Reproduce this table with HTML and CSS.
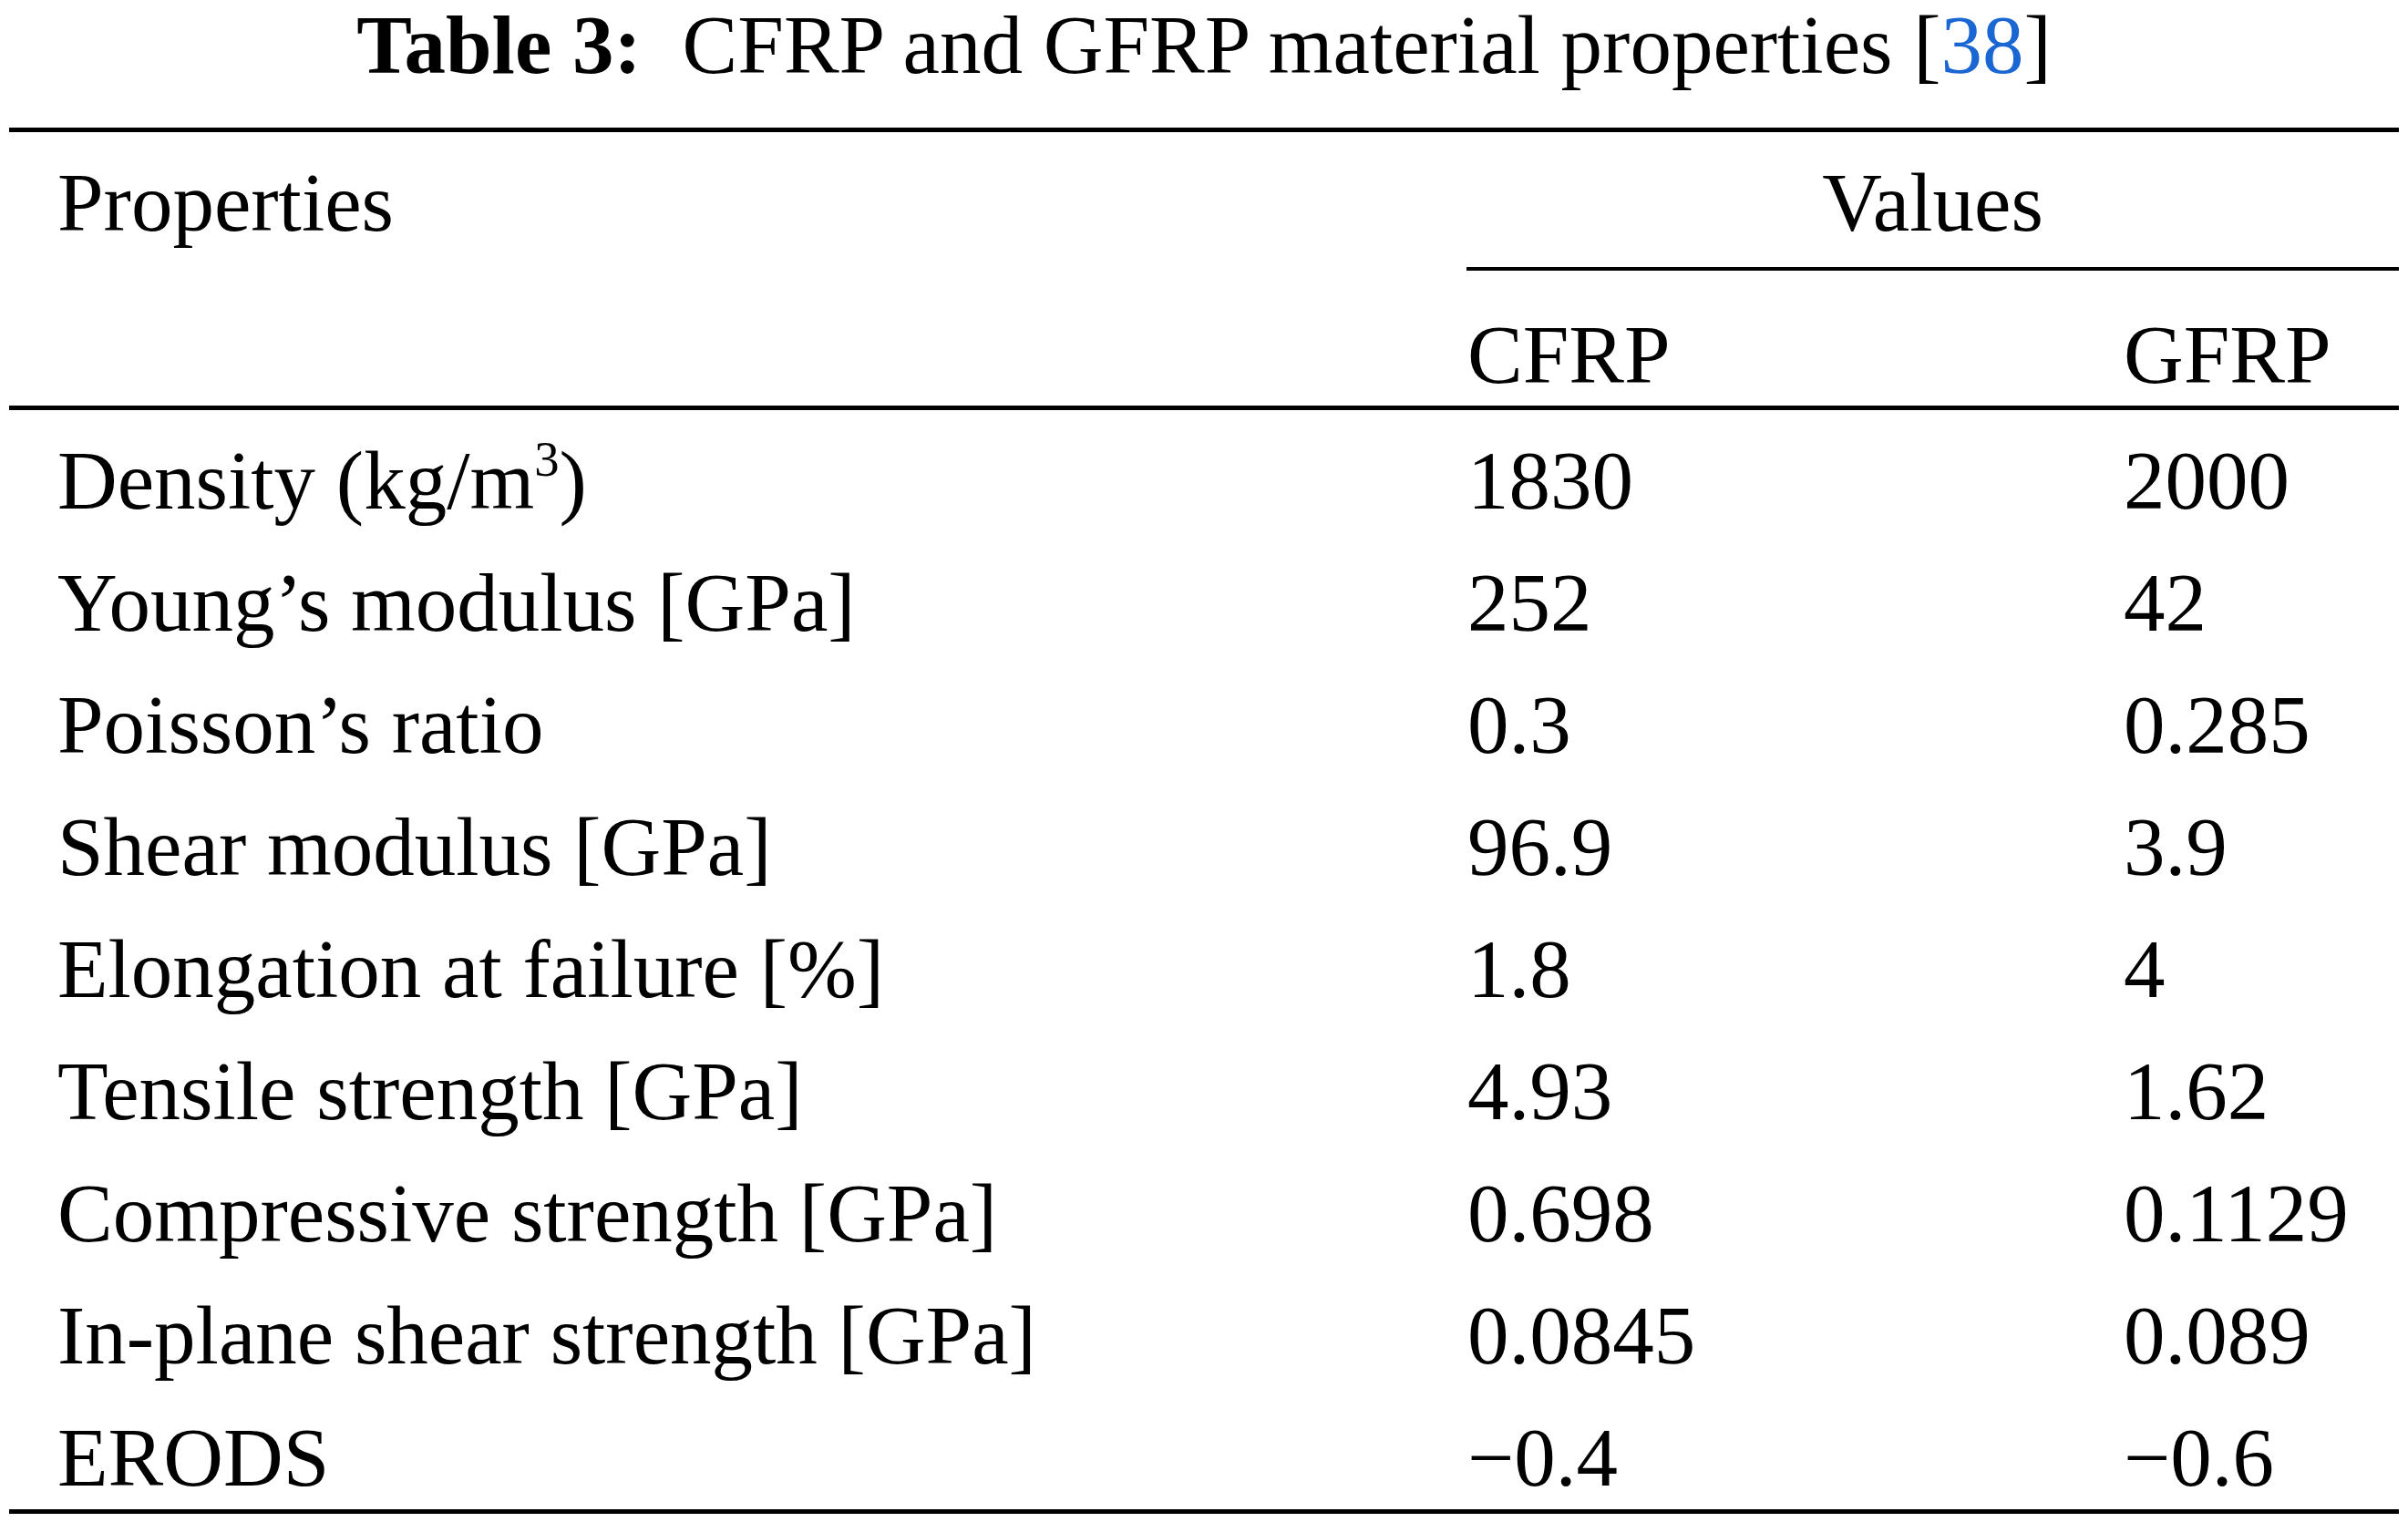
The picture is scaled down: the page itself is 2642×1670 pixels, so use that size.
FILE: index.html
```html
<!DOCTYPE html>
<html lang="en">
<head>
<meta charset="utf-8">
<title>Table 3: CFRP and GFRP material properties</title>
<link rel="stylesheet" href="styles.css">
</head>
<body>
<div class="page">
  <div class="caption"><span class="label">Table 3:</span> CFRP and GFRP material properties [<a class="ref" href="#ref38">38</a>]</div>
  <table class="props">
    <colgroup>
      <col class="c1">
      <col class="c2">
      <col class="c3">
    </colgroup>
    <thead>
      <tr>
        <th class="name h-prop" rowspan="2">Properties</th>
        <th class="h-values" colspan="2">Values</th>
      </tr>
      <tr>
        <th class="val h-sub">CFRP</th>
        <th class="val h-sub">GFRP</th>
      </tr>
    </thead>
    <tbody>
      <tr><td class="name">Density (kg/m<sup>3</sup>)</td><td class="val">1830</td><td class="val">2000</td></tr>
      <tr><td class="name">Young’s modulus [GPa]</td><td class="val">252</td><td class="val">42</td></tr>
      <tr><td class="name">Poisson’s ratio</td><td class="val">0.3</td><td class="val">0.285</td></tr>
      <tr><td class="name">Shear modulus [GPa]</td><td class="val">96.9</td><td class="val">3.9</td></tr>
      <tr><td class="name">Elongation at failure [%]</td><td class="val">1.8</td><td class="val">4</td></tr>
      <tr><td class="name">Tensile strength [GPa]</td><td class="val">4.93</td><td class="val">1.62</td></tr>
      <tr><td class="name">Compressive strength [GPa]</td><td class="val">0.698</td><td class="val">0.1129</td></tr>
      <tr><td class="name">In-plane shear strength [GPa]</td><td class="val">0.0845</td><td class="val">0.089</td></tr>
      <tr><td class="name">ERODS</td><td class="val">−0.4</td><td class="val">−0.6</td></tr>
    </tbody>
  </table>
</div>
</body>
</html>
```

FILE: styles.css
```css
html, body {
  margin: 0;
  padding: 0;
  background: #ffffff;
}

.page {
  width: 2642px;
  height: 1670px;
  font-family: "Liberation Serif", "Times New Roman", serif;
  font-size: 91px;
  color: #000000;
  overflow: hidden;
}

.caption {
  width: 2622px;
  margin-left: 10px;
  text-align: center;
  line-height: 100px;
  height: 100px;
  margin-bottom: 40px;
  white-space: nowrap;
}

.caption .label {
  font-weight: bold;
  margin-right: 22px;
}

.caption .ref {
  color: #1a66d2;
  text-decoration: none;
}

.props {
  margin-left: 10px;
  width: 2622px;
  table-layout: fixed;
  border-collapse: separate;
  border-spacing: 0;
  border-top: 5px solid #000;
  border-bottom: 5px solid #000;
}

.c1 { width: 1599px; }
.c2 { width: 720px; }
.c3 { width: 303px; }

.props th,
.props td {
  font-weight: normal;
  line-height: 100px;
  height: 100px;
  padding: 28px 0 6px 0;
  text-align: left;
  vertical-align: top;
  white-space: nowrap;
}

.props .name {
  padding-left: 53px;
}

.props .val {
  padding-left: 1px;
}

.props .h-prop {
  padding-top: 28px;
  padding-bottom: 0;
  height: auto;
  border-bottom: 5px solid #000;
}

.props .h-values {
  text-align: center;
  padding: 28px 0 20px 0;
  border-bottom: 4px solid #000;
}

.props .h-sub {
  padding-top: 43px;
  padding-bottom: 5px;
  border-bottom: 5px solid #000;
}

.props sup {
  font-size: 0.6em;
  line-height: 0;
  vertical-align: 0.66em;
}
```
